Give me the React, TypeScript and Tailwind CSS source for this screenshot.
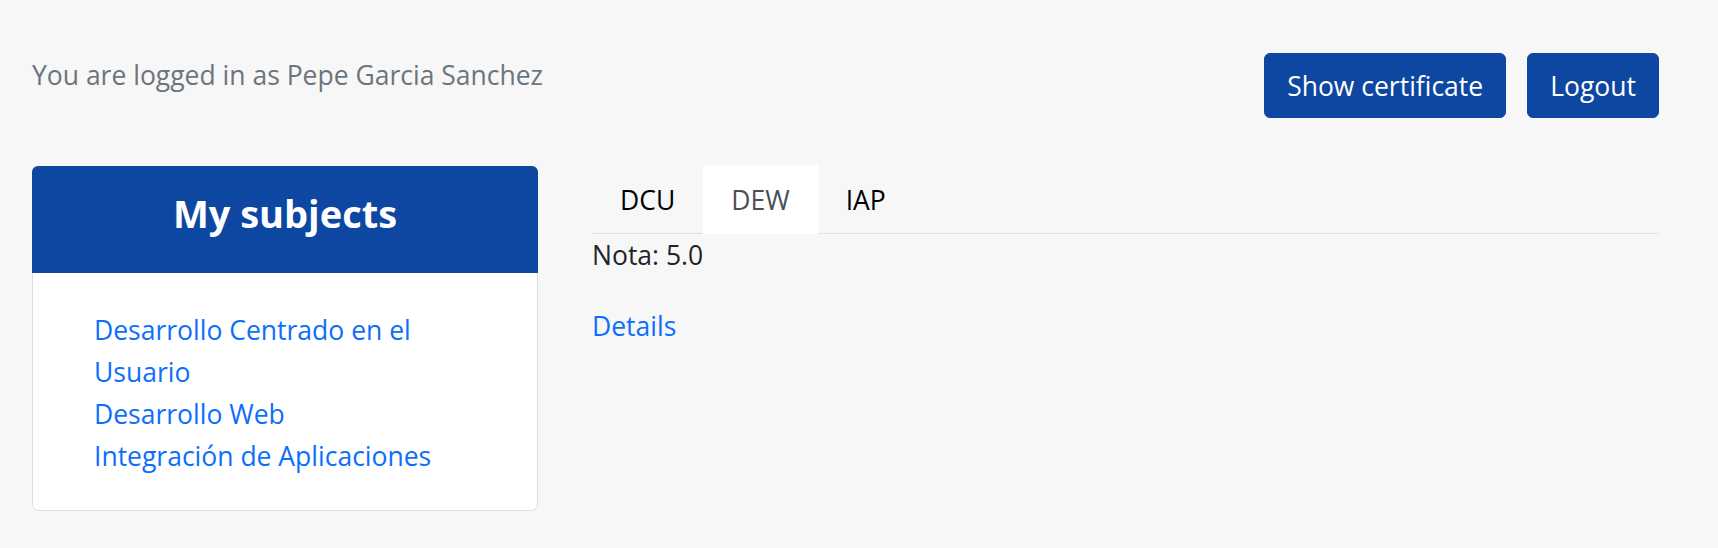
import React from "react";

const subjects = [
  "Desarrollo Centrado en el Usuario",
  "Desarrollo Web",
  "Integración de Aplicaciones",
];

const tabs = ["DCU", "DEW", "IAP"];

export default function App() {
  const active = "DEW";
  return (
    <div
      className="min-h-screen bg-[#f7f7f7] pl-[32px] pr-[59px] pt-[53px] text-[26.5px] leading-[42px] text-[#212529]"
      style={{ fontFamily: '"Open Sans", "Noto Sans", sans-serif' }}
    >
      <div className="flex items-start justify-between">
        <p className="mt-[1px] text-[26.5px] leading-[42px] text-[#6c757d]">
          You are logged in as Pepe Garcia Sanchez
        </p>
        <div className="flex gap-[21px]">
          <button className="rounded-[6px] border border-[#0e47a1] bg-[#0e47a1] px-[22px] pb-[10px] pt-[11px] text-white">
            Show certificate
          </button>
          <button className="rounded-[6px] border border-[#0e47a1] bg-[#0e47a1] px-[22px] pb-[10px] pt-[11px] text-white">
            Logout
          </button>
        </div>
      </div>

      <div className="mt-[48px] flex items-start gap-[54px]">
        <div className="w-[506px] shrink-0 overflow-hidden rounded-[6px]">
          <div className="h-[107px] bg-[#0e47a1] pt-[22px] text-center text-[38px] font-bold leading-[50px] text-white">
            My subjects
          </div>
          <div className="rounded-b-[6px] border border-t-0 border-[#dddddd] bg-white pb-[33px] pl-[61px] pt-[36px]">
            <ul className="w-[360px]">
              {subjects.map((s) => (
                <li key={s}>
                  <a href="#" className="text-[#0d6efd]">
                    {s}
                  </a>
                </li>
              ))}
            </ul>
          </div>
        </div>

        <div className="-mt-px flex-1">
          <ul className="flex border-b border-[#dee2e6]">
            {tabs.map((t) => (
              <li key={t} className="-mb-px">
                <a
                  href="#"
                  className={
                    t === active
                      ? "block border border-transparent bg-white px-[27px] pb-[12px] pt-[13px] text-[#495057]"
                      : "block border border-transparent px-[27px] pb-[12px] pt-[13px] text-black"
                  }
                >
                  {t}
                </a>
              </li>
            ))}
          </ul>
          <p className="mb-[29px]">Nota: 5.0</p>
          <a href="#" className="text-[#0d6efd]">
            Details
          </a>
        </div>
      </div>
    </div>
  );
}
